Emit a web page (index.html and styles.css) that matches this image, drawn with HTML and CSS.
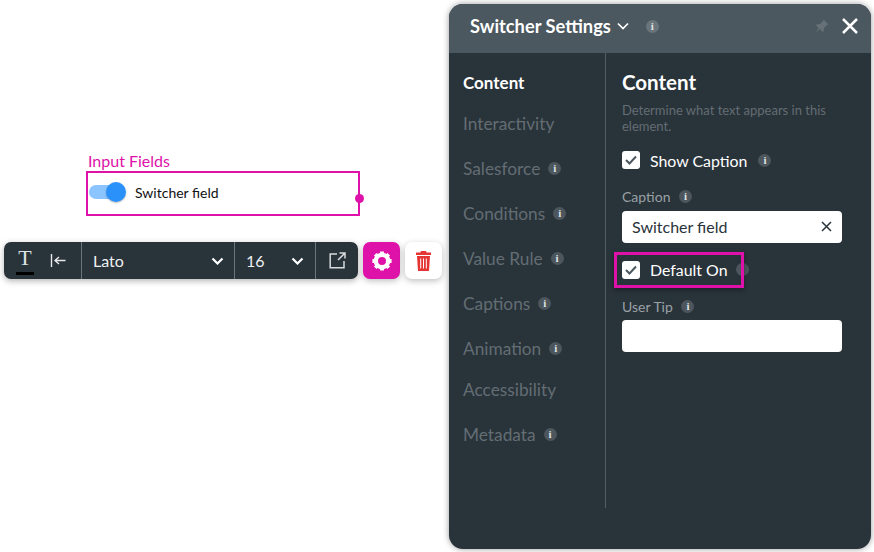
FILE: index.html
```html
<!DOCTYPE html>
<html lang="en">
<head>
<meta charset="utf-8">
<title>Switcher Settings</title>
<link rel="stylesheet" href="styles.css">
</head>
<body>
<div class="canvas">
  <div class="element">
    <div class="element-label">Input Fields</div>
    <div class="element-box">
      <span class="switch"><span class="switch-knob"></span></span>
      <span class="switch-text">Switcher field</span>
      <span class="handle"></span>
    </div>
  </div>

  <div class="toolbar-row">
    <div class="toolbar">
      <div class="tb-group tb-text">
        <span class="tb-t"><span class="tb-t-glyph">T</span></span>
        <svg class="tb-align" width="16" height="13" viewBox="0 0 16 13"><path d="M1.500 0v13M15.500 6.500H5M9 3L5 6.500 9 10" fill="none" stroke="#e6e8e9" stroke-width="1.400"/></svg>
      </div>
      <div class="tb-group tb-font">
        <span>Lato</span>
        <svg class="chev" width="13" height="8" viewBox="0 0 13 8"><path d="M1.500 1.500l5 5 5-5" fill="none" stroke="#fff" stroke-width="2.200"/></svg>
      </div>
      <div class="tb-group tb-size">
        <span>16</span>
        <svg class="chev" width="13" height="8" viewBox="0 0 13 8"><path d="M1.500 1.500l5 5 5-5" fill="none" stroke="#fff" stroke-width="2.200"/></svg>
      </div>
      <div class="tb-group tb-link">
        <svg width="17" height="17" viewBox="0 0 17 17"><path d="M8 2H1.200v13.800H15V9M9 8l7-7M10.500 1H16v5.500" fill="none" stroke="#d8dbdd" stroke-width="1.500"/></svg>
      </div>
    </div>
    <button class="tb-btn tb-gear" type="button">
      <svg width="20" height="20" viewBox="0 0 24 24"><circle cx="12" cy="12" r="7.400" fill="none" stroke="#fff" stroke-width="5.200"/><path d="M12 0.500v4M12 19.500v4M0.500 12h4M19.500 12h4M3.900 3.900l2.800 2.800M17.300 17.300l2.800 2.800M20.100 3.900l-2.800 2.800M6.700 17.300l-2.800 2.800" fill="none" stroke="#fff" stroke-width="4.600"/></svg>
    </button>
    <button class="tb-btn tb-trash" type="button">
      <svg width="15" height="20" viewBox="0 0 15 20"><path fill="#e63434" d="M5 0h5l.6 1.500H15v2.500H0V1.500h4.400zM1 5h13L13 20H2zM4.200 7.500v10h1v-10zm2.800 0v10h1v-10zm2.800 0v10h1v-10z"/></svg>
    </button>
  </div>

  <section class="panel">
    <header class="panel-head">
      <h1 class="panel-title">Switcher Settings</h1>
      <svg class="title-chev" width="12" height="8" viewBox="0 0 12 8"><path d="M1 1.500l5 5 5-5" fill="none" stroke="#fff" stroke-width="1.700"/></svg>
      <span class="info info-head">i</span>
      <span class="head-spacer"></span>
      <svg class="pin" width="15" height="15" viewBox="0 0 15 15"><path d="M9.500 0.500L14.500 5.500 13 6 10 9l-.3 3-1 1-3-3L1 14.300 4.700 9.300 2 6.300l1-1 3-.3 3-3z" fill="#667076"/></svg>
      <svg class="close" width="16" height="16" viewBox="0 0 16 16"><path d="M1 1l14 14M15 1L1 15" fill="none" stroke="#fff" stroke-width="2.500"/></svg>
    </header>
    <div class="panel-body">
      <nav class="nav">
        <div class="nav-item nav-active">Content</div>
        <div class="nav-item">Interactivity</div>
        <div class="nav-item"><span>Salesforce</span><span class="info">i</span></div>
        <div class="nav-item"><span>Conditions</span><span class="info">i</span></div>
        <div class="nav-item"><span>Value Rule</span><span class="info">i</span></div>
        <div class="nav-item"><span>Captions</span><span class="info">i</span></div>
        <div class="nav-item"><span>Animation</span><span class="info">i</span></div>
        <div class="nav-item nav-tight">Accessibility</div>
        <div class="nav-item"><span>Metadata</span><span class="info">i</span></div>
      </nav>
      <div class="content">
        <h2 class="content-title">Content</h2>
        <p class="content-desc">Determine what text appears in this element.</p>
        <div class="check-row check-first">
          <span class="check"><svg width="12" height="10" viewBox="0 0 12 10"><path d="M1 5l3.500 3.500L11 1.500" fill="none" stroke="#4c585f" stroke-width="2"/></svg></span>
          <span class="check-label">Show Caption</span>
          <span class="info">i</span>
        </div>
        <div class="field-label">Caption <span class="info">i</span></div>
        <div class="input">
          <span>Switcher field</span>
          <svg width="11" height="11" viewBox="0 0 11 11"><path d="M1 1l9 9M10 1l-9 9" fill="none" stroke="#29333a" stroke-width="1.500"/></svg>
        </div>
        <div class="check-row check-default">
          <span class="check"><svg width="12" height="10" viewBox="0 0 12 10"><path d="M1 5l3.500 3.500L11 1.500" fill="none" stroke="#4c585f" stroke-width="2"/></svg></span>
          <span class="check-label">Default On</span>
          <span class="info info-dim">i</span>
          <span class="highlight"></span>
        </div>
        <div class="field-label field-tip">User Tip <span class="info">i</span></div>
        <div class="input"></div>
      </div>
    </div>
  </section>
</div>
</body>
</html>
```
FILE: styles.css
```css
* { box-sizing: border-box; }
html, body { margin: 0; padding: 0; }
body { background: #fff; font-family: Lato, "Liberation Sans", sans-serif; overflow: hidden; }
.canvas { position: relative; width: 874px; height: 552px; }

.element { position: absolute; left: 86px; top: 151px; width: 274px; }
.element-label { color: #de12a8; font-size: 16px; line-height: 19px; margin-left: 2px; }
.element-box { position: relative; height: 45px; margin-top: 1px; border: 2px solid #de12a8; display: flex; align-items: center; padding: 0 0 3px 1px; }
.switch { position: relative; width: 34px; height: 14px; margin-right: 3px; border-radius: 7px; background: #8cc4ff; flex: none; }
.switch-knob { position: absolute; right: -3px; top: -3px; width: 20px; height: 20px; border-radius: 50%; background: #2a91fb; box-shadow: 0 1px 2px rgba(0,0,0,.25); }
.switch-text { font-size: 14px; color: #111; margin-left: 9px; }
.handle { position: absolute; right: -6px; top: 21px; width: 9px; height: 9px; border-radius: 50%; background: #de12a8; }

.toolbar-row { position: absolute; left: 4px; top: 242px; display: flex; gap: 5px; }
.toolbar { width: 354px; height: 37px; background: #29333a; border-radius: 7px; display: flex; box-shadow: 0 2px 6px rgba(0,0,0,.3); color: #eef0f1; font-size: 16px; }
.tb-group { display: flex; align-items: center; border-left: 1px solid #6b757b; }
.tb-text { width: 77px; border-left: 0; padding-left: 12px; gap: 16px; }
.tb-t { width: 18px; height: 30px; border-bottom: 3px solid #000; display: flex; justify-content: center; margin-top: -1px; }
.tb-t-glyph { font-family: "Liberation Serif", serif; font-size: 22px; line-height: 25px; color: #dfe2e3; }
.tb-font { width: 153px; padding: 0 10px 0 11px; justify-content: space-between; }
.tb-size { width: 81px; padding: 0 11px; justify-content: space-between; }
.tb-link { flex: 1; justify-content: center; }
.tb-btn { width: 37px; height: 37px; border: 0; padding: 0; border-radius: 7px; display: flex; align-items: center; justify-content: center; box-shadow: 0 2px 6px rgba(0,0,0,.25); }
.tb-gear { background: #de12a8; }
.tb-trash { background: #fff; }

.panel { position: absolute; left: 449px; top: 4px; width: 422px; height: 545px; border-radius: 14px; background: #29333a; box-shadow: 0 0 6px rgba(0,0,0,.4); overflow: hidden; display: flex; flex-direction: column; color: #fff; }
.panel-head { height: 49px; background: #4c585f; display: flex; align-items: center; padding: 0 13px 5px 21px; flex: none; }
.panel-title { margin: 0; font-size: 18.3px; font-weight: 700; line-height: 22px; }
.title-chev { margin-left: 6px; }
.info { display: inline-flex; width: 13px; height: 13px; border-radius: 50%; background: #4c565c; color: #dfe2e3; font-family: "Liberation Serif", serif; font-weight: 700; font-size: 11px; line-height: 13px; align-items: center; justify-content: center; vertical-align: 2px; margin-left: 3px; flex: none; }
.info-head { background: #6a757b; margin-left: 17px; }
.info-dim { color: #3f494f; }
.head-spacer { flex: 1; }
.pin { margin-right: 13px; }

.panel-body { flex: 1; display: flex; align-items: flex-start; }
.nav { width: 157px; height: 455px; border-right: 1px solid #545e64; padding: 11px 0 0 14px; flex: none; }
.nav-item { height: 45px; display: flex; align-items: center; font-size: 17.3px; color: #636d73; white-space: nowrap; }
.nav-item .info { margin-left: 8px; }
.nav-active { height: 37px; font-size: 17px; font-weight: 700; color: #fff; }
.nav-tight { margin-top: -4px; }

.content { flex: 1; padding: 16px 29px 0 16px; }
.content-title { margin: 0; font-size: 20.5px; font-weight: 700; line-height: 26px; }
.content-desc { margin: 7px 0 0; font-size: 13px; line-height: 16px; color: #636d73; }
.check-row { position: relative; display: flex; align-items: center; height: 24px; }
.check-first { margin-top: 14px; }
.check { width: 18px; height: 18px; border-radius: 3px; background: #fff; display: flex; align-items: center; justify-content: center; flex: none; }
.check-label { margin-left: 10px; font-size: 15.9px; white-space: nowrap; }
.check-row .info { margin-left: 11px; }
.field-label { margin-top: 16px; font-size: 14px; line-height: 17px; color: #99a1a6; }
.field-label .info { margin-left: 5px; }
.input { margin-top: 6px; height: 32px; width: 220px; background: #fff; border-radius: 4px; display: flex; align-items: center; justify-content: space-between; padding: 0 10px 1px; color: #29333a; font-size: 16px; }
.check-default { margin-top: 9px; height: 34px; padding-top: 1px; }
.check-default .info { margin-left: 8px; }
.highlight { position: absolute; left: -8px; top: 0; width: 130px; height: 36px; border: 3px solid #de12a8; box-shadow: 0 2px 5px rgba(0,0,0,.35); }
.field-tip { margin-top: 12px; }
.field-tip + .input { margin-top: 5px; }
```
